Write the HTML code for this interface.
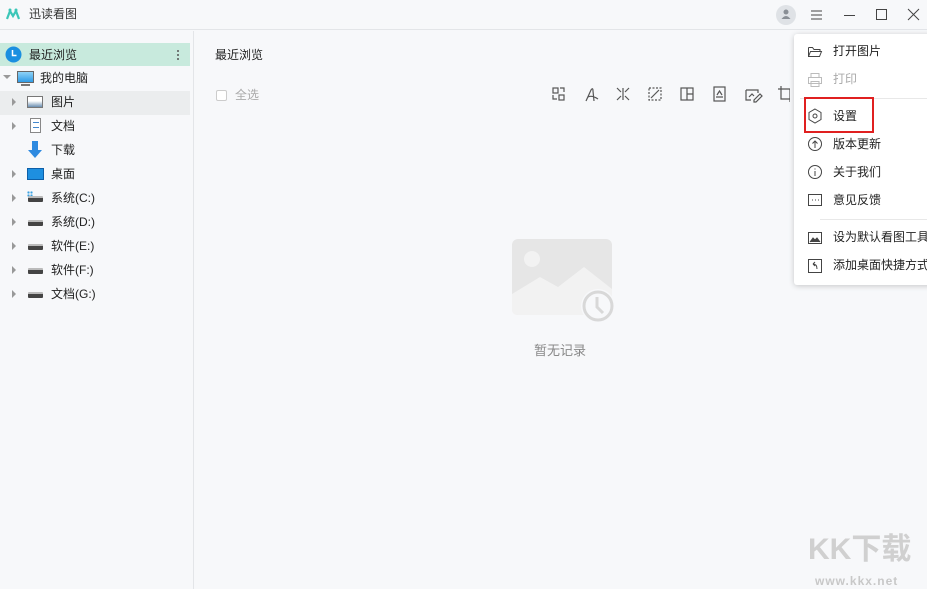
<!DOCTYPE html><html><head><meta charset="utf-8"><style>
*{margin:0;padding:0;box-sizing:border-box}
body{width:927px;height:589px;overflow:hidden;background:#f7f8fa;font-family:"Liberation Sans","Noto Sans CJK SC",sans-serif;font-size:12px;color:#222;position:relative}
.a{position:absolute}
.t{position:absolute;white-space:nowrap;line-height:16px}
.row{position:absolute;left:0;width:190px;height:24px}
.tri{position:absolute;width:0;height:0;border-top:4px solid transparent;border-bottom:4px solid transparent;border-left:4px solid #999;left:12px;top:8px}
.drive{position:absolute;left:28px;top:10px;width:15px;height:6px;background:#444;border-radius:1px;border-top:2px solid #bbb}
.mi{position:absolute;left:833px;line-height:16px;font-size:12px;color:#222;white-space:nowrap}
.ic{position:absolute;left:807px}
</style></head><body>
<div class="a" style="left:0;top:0;width:927px;height:30px;background:#f7f8fa;border-bottom:1px solid #e3e5e8"></div>
<svg class="a" style="left:6px;top:7px" width="14" height="14"><path d="M1 12 L4 4 L7 9 L10 4 L13 12" fill="none" stroke="#3cc6b8" stroke-width="2.2"/><circle cx="4" cy="3" r="1.5" fill="#3cc6b8"/><circle cx="10" cy="3" r="1.5" fill="#3cc6b8"/></svg>
<div class="t" style="left:29px;top:6px;color:#333">迅读看图</div>
<div class="a" style="left:776px;top:5px;width:20px;height:20px;border-radius:50%;background:#dfe2e6"></div>
<svg class="a" style="left:780px;top:8px" width="12" height="13"><circle cx="6" cy="4" r="2.5" fill="#8a8f96"/><path d="M1.5 11 Q6 5 10.5 11Z" fill="#8a8f96"/></svg>
<svg class="a" style="left:810px;top:8px" width="14" height="14"><path d="M1 3H12M1 7H12M1 11H12" stroke="#444" stroke-width="1"/></svg>
<svg class="a" style="left:843px;top:8px" width="14" height="14"><path d="M1 7.5H12" stroke="#444"/></svg>
<svg class="a" style="left:875px;top:8px" width="14" height="14"><rect x="1.5" y="1.5" width="10" height="10" fill="none" stroke="#444"/></svg>
<svg class="a" style="left:907px;top:8px" width="14" height="14"><path d="M1 1L12 12M12 1L1 12" stroke="#444"/></svg>
<div class="a" style="left:193px;top:31px;width:1px;height:558px;background:#e3e5e8"></div>
<div class="a" style="left:0;top:43px;width:190px;height:23px;background:#c8eadd"></div>
<svg class="a" style="left:5px;top:46px" width="17" height="17"><circle cx="8.5" cy="8.5" r="8" fill="#1a8fe0"/><path d="M7.5 4V9.5H11.5" stroke="#fff" stroke-width="1.5" fill="none"/></svg>
<div class="t" style="left:29px;top:47px">最近浏览</div>
<div class="a" style="left:177px;top:49px;width:2px;height:11px;background:radial-gradient(circle,#555 0.9px,transparent 1px) 0 0/2px 4px"></div>
<div class="a" style="left:3px;top:75px;border-left:4px solid transparent;border-right:4px solid transparent;border-top:4px solid #999"></div>
<div class="a" style="left:17px;top:71px;width:17px;height:12px;background:linear-gradient(#8fd3f7,#2f9be6);border:1px solid #666"></div>
<div class="a" style="left:21px;top:84px;width:9px;height:2px;background:#777"></div>
<div class="t" style="left:40px;top:70px">我的电脑</div>
<div class="a" style="left:0;top:91px;width:190px;height:24px;background:#ebedee"></div>
<div class="row" style="top:90px"><div class="tri"></div><div class="a" style="left:27px;top:6px;width:16px;height:12px;border:1px solid #777;background:linear-gradient(#fff 40%,#6a8eb0)"></div><div class="t" style="left:51px;top:4px">图片</div></div>
<div class="row" style="top:114px"><div class="tri"></div><div class="a" style="left:30px;top:4px;width:11px;height:15px;border:1px solid #888;background:#fff"></div><div class="a" style="left:33px;top:8px;width:6px;height:6px;border-top:1px solid #48c;border-bottom:1px solid #48c"></div><div class="t" style="left:51px;top:4px">文档</div></div>
<div class="row" style="top:138px"><svg class="a" style="left:27px;top:3px" width="16" height="18"><path d="M5 0H11V9H15L8 17L1 9H5Z" fill="#2e8ae0"/></svg><div class="t" style="left:51px;top:4px">下载</div></div>
<div class="row" style="top:162px"><div class="tri"></div><div class="a" style="left:27px;top:6px;width:17px;height:12px;background:#1e8fe0;border:1px solid #0d5fa8"></div><div class="t" style="left:51px;top:4px">桌面</div></div>
<div class="row" style="top:186px"><div class="tri"></div><div class="a" style="left:27px;top:5px;width:6px;height:6px;background:radial-gradient(circle,#3aa0e0 1px,transparent 1.3px) 0 0/3px 3px"></div><div class="drive"></div><div class="t" style="left:51px;top:4px">系统(C:)</div></div>
<div class="row" style="top:210px"><div class="tri"></div><div class="drive"></div><div class="t" style="left:51px;top:4px">系统(D:)</div></div>
<div class="row" style="top:234px"><div class="tri"></div><div class="drive"></div><div class="t" style="left:51px;top:4px">软件(E:)</div></div>
<div class="row" style="top:258px"><div class="tri"></div><div class="drive"></div><div class="t" style="left:51px;top:4px">软件(F:)</div></div>
<div class="row" style="top:282px"><div class="tri"></div><div class="drive"></div><div class="t" style="left:51px;top:4px">文档(G:)</div></div>
<div class="t" style="left:215px;top:47px">最近浏览</div>
<div class="a" style="left:216px;top:90px;width:11px;height:11px;border:1px solid #ccc;border-radius:2px;background:#fff"></div>
<div class="t" style="left:235px;top:87px;color:#aaa">全选</div>
<svg class="a" style="left:550px;top:86px" width="240" height="18" fill="none" stroke="#555" stroke-width="1.2">
<rect x="3" y="2" width="5" height="5"/><rect x="9" y="9" width="5" height="5"/><path d="M3 9v4h4M10 2h4v4"/>
<path d="M36 15 L41 4 Q43 1 43 5 L44 15 M38 11 Q42 9 48 13"/>
<path d="M67 2l4 4M79 2l-4 4M67 14l4-4M79 14l-4-4M73 2v12" />
<rect x="99" y="2" width="12" height="12" stroke-dasharray="2 1.5"/><path d="M101 12L109 4"/>
<rect x="131" y="2" width="12" height="12"/><path d="M137 2v12M137 8h6"/>
<rect x="164" y="1" width="11" height="14"/><path d="M166 11h7M167 9l2.5-4 2.5 4"/>
<path d="M196 4h12v3M196 4v10h5M199 11l3-3 2 2M204 14l6-6 2 2-6 6h-2z"/>
<path d="M231 0v13h12M228 3h12v13"/></svg>
<svg class="a" style="left:512px;top:239px" width="106" height="85"><rect x="0" y="0" width="100" height="76" rx="6" fill="#e6e6e6"/><circle cx="20" cy="20" r="8" fill="#f2f2f2"/><path d="M0 55 L28 38 L46 48 L72 28 L100 50 V70 Q100 76 94 76 H6 Q0 76 0 70Z" fill="#f2f2f2"/><circle cx="86" cy="67" r="17" fill="#f7f8fa"/><circle cx="86" cy="67" r="14" fill="none" stroke="#d8d8d8" stroke-width="3"/><path d="M85 58V68L91 74" stroke="#d8d8d8" stroke-width="3" fill="none"/></svg>
<div class="t" style="left:534px;top:343px;color:#888;font-size:13px">暂无记录</div>
<div class="a" style="left:794px;top:34px;width:140px;height:251px;background:#fff;box-shadow:0 1px 6px rgba(0,0,0,.2);border-radius:3px"></div>
<svg class="ic" style="top:44px" width="16" height="16" fill="none" stroke="#444"><path d="M1.5 3.5h4l1.5 2h6v2M1.5 3.5v9h11l2-5h-11l-2 5"/></svg>
<div class="mi" style="top:43px">打开图片</div>
<svg class="ic" style="top:72px" width="16" height="16" fill="none" stroke="#bbb"><rect x="4" y="1.5" width="8" height="4"/><rect x="1.5" y="5.5" width="13" height="6"/><rect x="4" y="9.5" width="8" height="5"/></svg>
<div class="mi" style="top:71px;color:#aaa">打印</div>
<div class="a" style="left:800px;top:98px;width:127px;height:1px;background:#e8e8e8"></div>
<div class="a" style="left:804px;top:97px;width:70px;height:36px;border:2px solid #e02020"></div>
<svg class="ic" style="top:108px" width="16" height="16" fill="none" stroke="#444"><path d="M8 1L14 4.5V11.5L8 15L2 11.5V4.5Z"/><circle cx="8" cy="8" r="2"/></svg>
<div class="mi" style="top:108px">设置</div>
<svg class="ic" style="top:136px" width="16" height="16" fill="none" stroke="#444"><circle cx="8" cy="8" r="6.5"/><path d="M8 12V5M5.5 7.5L8 5l2.5 2.5"/></svg>
<div class="mi" style="top:136px">版本更新</div>
<svg class="ic" style="top:164px" width="16" height="16" fill="none" stroke="#444"><circle cx="8" cy="8" r="6.5"/><path d="M8 7v5M8 4.5v1"/></svg>
<div class="mi" style="top:164px">关于我们</div>
<svg class="ic" style="top:192px" width="16" height="16" fill="none" stroke="#444"><rect x="1.5" y="2.5" width="13" height="11"/><path d="M5 8h1M8 8h1M11 8h1"/></svg>
<div class="mi" style="top:192px">意见反馈</div>
<div class="a" style="left:820px;top:219px;width:107px;height:1px;background:#e8e8e8"></div>
<svg class="ic" style="top:230px" width="16" height="16" fill="none" stroke="#444"><rect x="1.5" y="2.5" width="13" height="11"/><path d="M3 12l3-4 2 2 2-2 3 4" fill="#444"/></svg>
<div class="mi" style="top:229px">设为默认看图工具</div>
<svg class="ic" style="top:258px" width="16" height="16" fill="none" stroke="#444"><rect x="1.5" y="1.5" width="13" height="13"/><path d="M10 11Q10 6 6 6M6 6l2-2M6 6l2 2"/></svg>
<div class="mi" style="top:257px">添加桌面快捷方式</div>
<div class="t" style="left:808px;top:532px;font-size:30px;font-weight:bold;color:#d0d0d0;line-height:36px">KK下载</div>
<div class="t" style="left:815px;top:574px;font-size:12px;font-weight:bold;color:#c8c8c8;letter-spacing:1px;line-height:14px">www.kkx.net</div>
</body></html>
